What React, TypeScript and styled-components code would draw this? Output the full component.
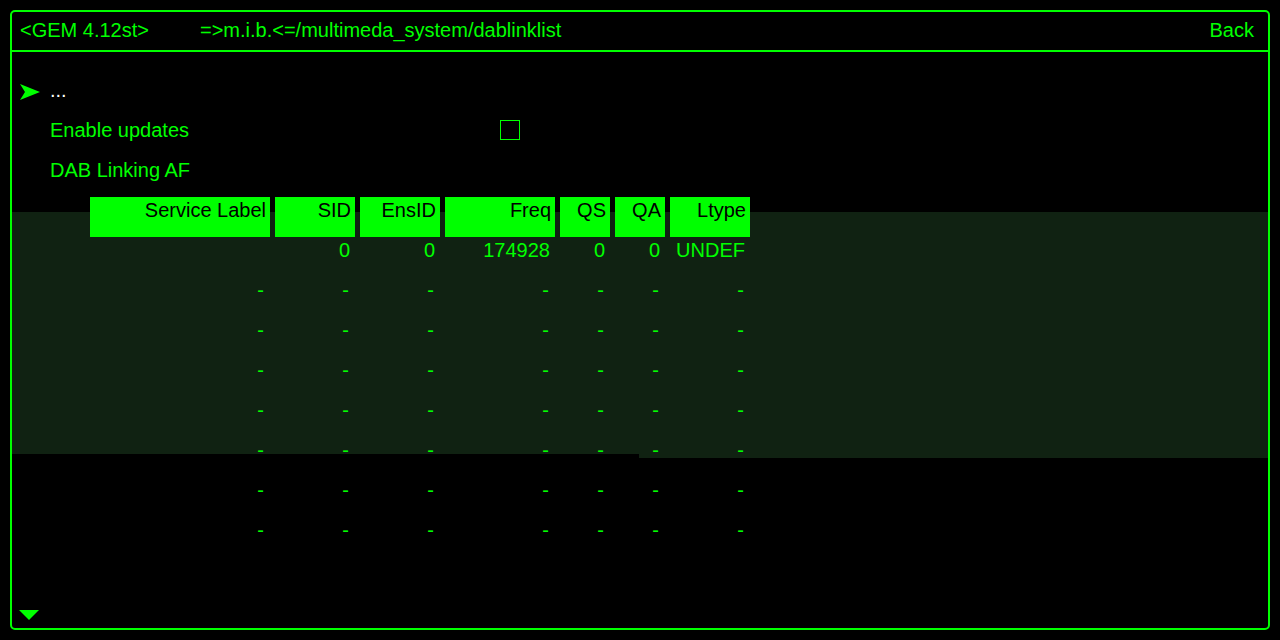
import React from "react";
import styled, { createGlobalStyle } from "styled-components";

const green = "#00ff00";
const shade = "#102212";

const GlobalStyle = createGlobalStyle`
    html, body {
        margin: 0;
        padding: 0;
        background: #000;
        width: 1280px;
        height: 640px;
        overflow: hidden;
        font-family: "Liberation Sans", Arial, sans-serif;
    }
    * {
        box-sizing: border-box;
    }
`;

const Screen = styled.div`
    width: 1280px;
    height: 640px;
    padding: 10px;
    background: #000;
`;

const Frame = styled.div`
    position: relative;
    height: 100%;
    border: 2px solid ${green};
    border-radius: 5px;
    display: flex;
    flex-direction: column;
`;

const TitleBar = styled.header`
    height: 40px;
    flex: none;
    border-bottom: 2px solid ${green};
    display: flex;
    align-items: center;
    padding: 0 14px 2px 8px;
    color: ${green};
    font-size: 20px;
    position: relative;
    z-index: 1;
`;

const Version = styled.span`
    width: 180px;
`;

const Path = styled.span`
    flex: 1;
`;

const Content = styled.main`
    position: relative;
    flex: 1;
    padding-top: 25px;
`;

const Shade = styled.div<{ $left: number; $width: number; $top: number; $height: number }>`
    position: absolute;
    left: ${({ $left }) => $left}px;
    width: ${({ $width }) => $width}px;
    top: ${({ $top }) => $top}px;
    height: ${({ $height }) => $height}px;
    background: ${shade};
`;

const Rows = styled.div`
    position: relative;
    display: flex;
    flex-direction: column;
`;

const MenuRow = styled.div`
    height: 40px;
    display: flex;
    align-items: flex-start;
    font-size: 20px;
    line-height: 26px;
    color: ${green};
`;

const Pointer = styled.span`
    width: 38px;
    flex: none;
    padding-left: 8px;
    height: 30px;
    display: flex;
    align-items: center;
`;

const Label = styled.span<{ $white?: boolean }>`
    width: 450px;
    color: ${({ $white }) => ($white ? "#ffffff" : green)};
`;

const CheckBox = styled.span`
    width: 20px;
    height: 20px;
    margin-top: 3px;
    border: 1.5px solid ${green};
`;

const Table = styled.div`
    margin-left: 78px;
    display: grid;
    grid-template-columns: 180px 80px 80px 110px 50px 50px 80px;
    grid-auto-rows: 40px;
    column-gap: 5px;
    width: max-content;
`;

const HeadCell = styled.div`
    background: ${green};
    color: #000;
    font-size: 20px;
    line-height: 26px;
    text-align: right;
    padding-right: 4px;
`;

const Cell = styled.div`
    color: ${green};
    font-size: 20px;
    line-height: 26px;
    text-align: right;
    padding-right: 5px;
`;

const DashCell = styled(Cell)`
    padding-right: 6px;
`;

const ScrollDown = styled.div`
    position: absolute;
    left: 7px;
    bottom: 8px;
    width: 0;
    height: 0;
    border-left: 10px solid transparent;
    border-right: 10px solid transparent;
    border-top: 10px solid ${green};
`;

const columns = ["Service Label", "SID", "EnsID", "Freq", "QS", "QA", "Ltype"];
const firstRow = ["", "0", "0", "174928", "0", "0", "UNDEF"];

const Arrow = () => (
    <svg width="20" height="16" viewBox="0 0 20 16">
        <polygon points="0,0 20,8 0,16 5,8" fill={green} />
    </svg>
);

const App: React.FC = () => (
    <Screen>
        <GlobalStyle />
        <Frame>
            <TitleBar>
                <Version>&lt;GEM 4.12st&gt;</Version>
                <Path>=&gt;m.i.b.&lt;=/multimeda_system/dablinklist</Path>
                <span>Back</span>
            </TitleBar>
            <Content>
                <Shade $left={0} $width={627} $top={160} $height={242} />
                <Shade $left={627} $width={629} $top={160} $height={246} />
                <Rows>
                    <MenuRow>
                        <Pointer>
                            <Arrow />
                        </Pointer>
                        <Label $white>...</Label>
                    </MenuRow>
                    <MenuRow>
                        <Pointer />
                        <Label>Enable updates</Label>
                        <CheckBox />
                    </MenuRow>
                    <MenuRow>
                        <Pointer />
                        <Label>DAB Linking AF</Label>
                    </MenuRow>
                    <Table>
                        {columns.map((c) => (
                            <HeadCell key={c}>{c}</HeadCell>
                        ))}
                        {firstRow.map((v, i) => (
                            <Cell key={"r0" + i}>{v}</Cell>
                        ))}
                        {Array.from({ length: 7 }).map((_, r) =>
                            columns.map((c) => <DashCell key={r + c}>-</DashCell>),
                        )}
                    </Table>
                </Rows>
                <ScrollDown />
            </Content>
        </Frame>
    </Screen>
);

export default App;
